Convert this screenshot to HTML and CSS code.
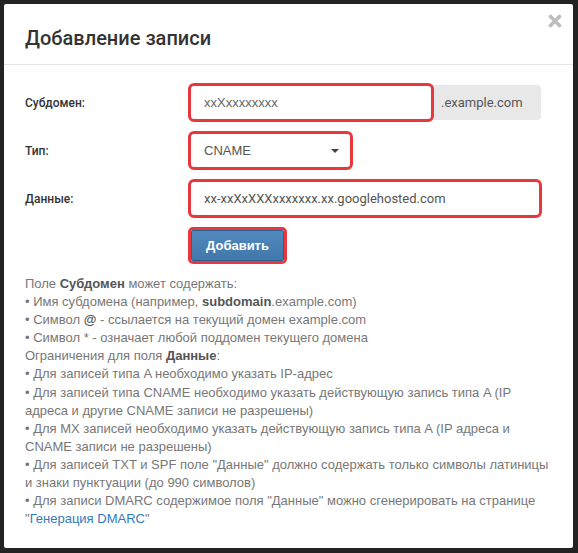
FILE: index.html
```html
<!DOCTYPE html>
<html lang="ru">
<head>
<meta charset="utf-8">
<link rel="stylesheet" href="styles.css">
</head>
<body>
<div class="modal">
  <div class="modal-header">
    <h4 class="title">Добавление записи</h4>
    <span class="close" aria-label="Закрыть">
      <svg width="14" height="14" viewBox="0 0 14 14"><path d="M2.5 2.5 L11.5 11.5 M11.5 2.5 L2.5 11.5" stroke="#bdbdbd" stroke-width="3.6" stroke-linecap="round"/></svg>
    </span>
  </div>
  <div class="modal-body">
    <form class="form">
      <label class="label">Субдомен:</label>
      <div class="field">
        <div class="group">
          <div class="control mark w-sub">xxXxxxxxxxx</div>
          <span class="addon">.example.com</span>
        </div>
      </div>
      <label class="label">Тип:</label>
      <div class="field">
        <div class="control mark w-type select">CNAME<span class="caret"></span></div>
      </div>
      <label class="label">Данные:</label>
      <div class="field">
        <div class="control mark w-data">xx-xxXxXXXxxxxxxx.xx.googlehosted.com</div>
      </div>
      <span></span>
      <div class="field">
        <span class="btn-mark"><button type="button" class="btn">Добавить</button></span>
      </div>
    </form>
    <div class="help">
      Поле <b>Субдомен</b> может содержать:<br>
      • Имя субдомена (например, <b>subdomain</b>.example.com)<br>
      • Символ <b>@</b> - ссылается на текущий домен example.com<br>
      • Символ * - означает любой поддомен текущего домена<br>
      Ограничения для поля <b>Данные</b>:<br>
      • Для записей типа A необходимо указать IP-адрес<br>
      • Для записей типа CNAME необходимо указать действующую запись типа A (IP адреса и другие CNAME записи не разрешены)<br>
      • Для MX записей необходимо указать действующую запись типа A (IP адреса и CNAME записи не разрешены)<br>
      • Для записей TXT и SPF поле "Данные" должно содержать только символы латиницы и знаки пунктуации (до 990 символов)<br>
      • Для записи DMARC содержимое поля "Данные" можно сгенерировать на странице <span class="nowrap">"<a href="#">Генерация DMARC</a>"</span>
    </div>
  </div>
</div>
</body>
</html>
```
FILE: styles.css
```css
html, body {
  margin: 0;
  padding: 0;
  background: #232323;
}
body {
  width: 578px;
  height: 553px;
  overflow: hidden;
  padding: 4px 0 0 4px;
  box-sizing: border-box;
  font-family: "Liberation Sans", Arial, sans-serif;
}
.modal {
  width: 569px;
  height: 544px;
  background: #fff;
  border-radius: 2px;
  box-sizing: border-box;
}
.modal-header {
  height: 61px;
  border-bottom: 1px solid #e5e5e5;
  display: flex;
  justify-content: space-between;
  padding: 0 11px 0 21px;
  box-sizing: border-box;
}
.title {
  margin: 0;
  padding-top: 22px;
  font-family: Roboto, "Liberation Sans", sans-serif;
  font-weight: 500;
  font-size: 20px;
  line-height: 24px;
  color: #333;
}
.close {
  padding-top: 10px;
}
.close svg { display: block; }
.modal-body {
  padding: 18px 20px 0 21px;
}
.form {
  display: grid;
  grid-template-columns: 163px 1fr;
  row-gap: 9px;
  align-items: center;
}
.label {
  font-family: Roboto, "Liberation Sans", sans-serif;
  font-weight: 500;
  font-size: 12px;
  color: #333;
}
.group {
  display: flex;
  align-items: center;
}
.control {
  height: 39px;
  box-sizing: border-box;
  border: 3px solid #e8383d;
  border-radius: 6px;
  padding: 0 13px;
  display: flex;
  align-items: center;
  font-size: 13px;
  color: #555;
  background: #fff;
}
.w-sub { width: 246px; position: relative; z-index: 1; color: #666; }
.w-type { width: 165px; justify-content: space-between; padding-right: 11px; }
.w-data { width: 354px; font-family: Roboto, "Liberation Sans", sans-serif; }
.addon {
  height: 35px;
  width: 110px;
  margin-left: -3px;
  background: #e8e8e8;
  border-radius: 0 4px 4px 0;
  display: flex;
  align-items: center;
  padding-left: 10px;
  box-sizing: border-box;
  font-family: Roboto, "Liberation Sans", sans-serif;
  font-size: 13px;
  color: #555;
}
.caret {
  width: 0;
  height: 0;
  border-left: 4px solid transparent;
  border-right: 4px solid transparent;
  border-top: 4px solid #444;
}
.btn-mark {
  display: inline-block;
  border: 3px solid #e8383d;
  border-radius: 5px;
  padding: 0;
  line-height: 0;
}
.btn {
  width: 93px;
  height: 31px;
  border: 1px solid #2e5f8f;
  border-radius: 2px;
  background: linear-gradient(#5189be, #4178ab);
  color: #fff;
  font-family: "Liberation Sans", Arial, sans-serif;
  font-weight: bold;
  font-size: 13px;
  padding: 0;
  margin: 0;
}
.help {
  margin-top: 11px;
  font-size: 13px;
  line-height: 18.1px;
  color: #777;
}
.help b {
  color: #555;
}
.help a {
  color: #2f7bbd;
  text-decoration: none;
}
.nowrap {
  white-space: nowrap;
}
```
